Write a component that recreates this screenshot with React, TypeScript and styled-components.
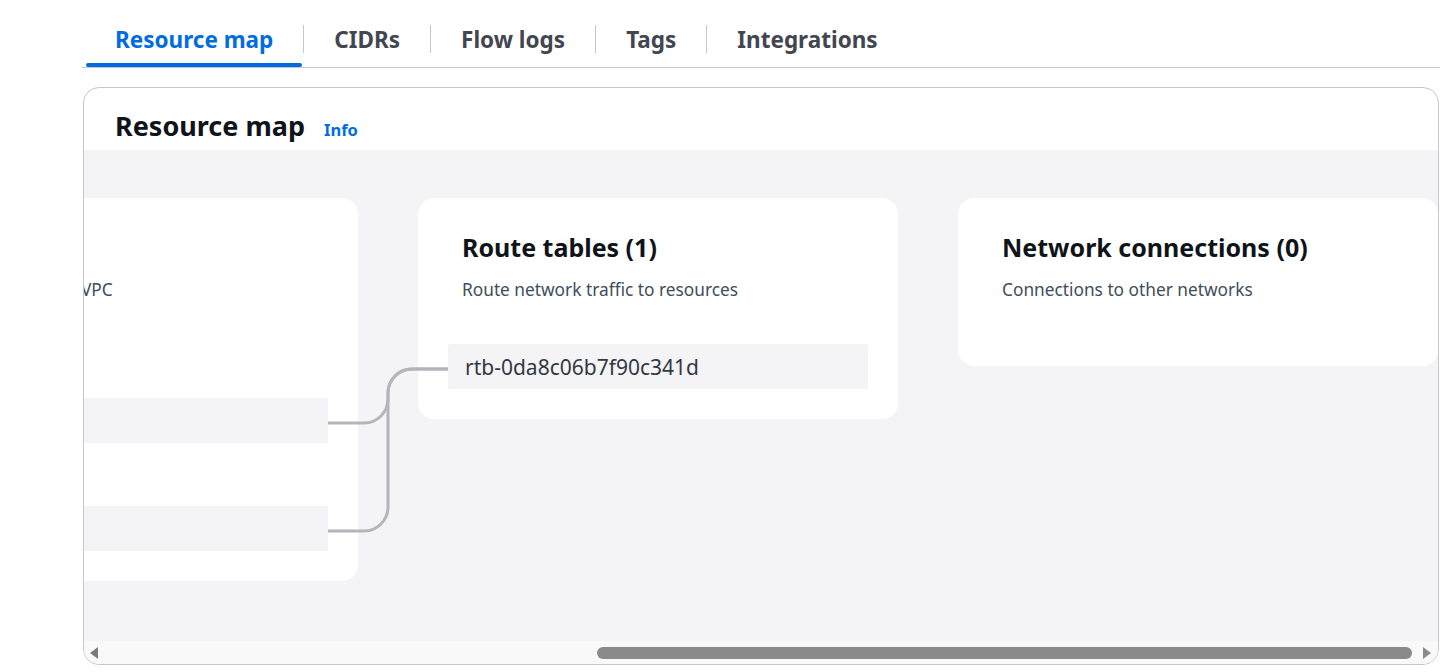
import styled, { createGlobalStyle } from "styled-components"

const GlobalStyle = createGlobalStyle`
  html, body {
    margin: 0;
    padding: 0;
    background: #ffffff;
    font-family: "Noto Sans", "Open Sans", sans-serif;
    overflow: hidden;
  }
`

const tabs = ["Resource map", "CIDRs", "Flow logs", "Tags", "Integrations"]

export default function App() {
  return (
    <Page>
      <GlobalStyle />
      <TabBar>
        {tabs.map((t, i) => (
          <TabWrap key={t}>
            {i > 0 && <Divider />}
            <Tab $active={i === 0}>{t}</Tab>
          </TabWrap>
        ))}
      </TabBar>
      <Container>
        <Header>
          <Title>Resource map</Title>
          <Info>Info</Info>
        </Header>
        <MapArea>
          <Track>
            <Card>
              <CardHead>
                <CardTitle>Subnets (2)</CardTitle>
                <CardSub>Subnets within this VPC</CardSub>
              </CardHead>
              <List>
                <Group>
                  <GroupLabel>us-east-1a</GroupLabel>
                  <Row />
                </Group>
                <Group>
                  <GroupLabel>us-east-1b</GroupLabel>
                  <Row />
                </Group>
              </List>
            </Card>
            <Card>
              <CardHead>
                <CardTitle>Route tables (1)</CardTitle>
                <CardSub>Route network traffic to resources</CardSub>
              </CardHead>
              <List>
                <Row>rtb-0da8c06b7f90c341d</Row>
              </List>
            </Card>
            <Card>
              <CardHead>
                <CardTitle>Network connections (0)</CardTitle>
                <CardSub>Connections to other networks</CardSub>
              </CardHead>
            </Card>
            <Links width="1600" height="420">
              <path d="M450 225 H486 A24 24 0 0 0 510 201 V195 A24 24 0 0 1 534 171 H570" />
              <path d="M450 333 H486 A24 24 0 0 0 510 309 V195 A24 24 0 0 1 534 171 H570" />
            </Links>
          </Track>
        </MapArea>
        <ScrollBar>
          <Arrow viewBox="0 0 10 12">
            <polygon points="9,0 9,12 1,6" fill="#7a7a7a" />
          </Arrow>
          <ScrollTrack>
            <Thumb $left={496} $width={815} />
          </ScrollTrack>
          <Arrow viewBox="0 0 10 12">
            <polygon points="1,0 1,12 9,6" fill="#8a8a8a" />
          </Arrow>
        </ScrollBar>
      </Container>
    </Page>
  )
}

const Page = styled.div`
  padding: 19px 15px 0 82px;
`
const TabBar = styled.div`
  display: flex;
  padding-left: 3px;
  border-bottom: 1px solid #c6c6cd;
`
const TabWrap = styled.div`
  display: flex;
  align-items: flex-start;
`
const Divider = styled.span`
  width: 1px;
  height: 28px;
  margin-top: 6px;
  background: #c6c6cd;
`
const Tab = styled.div<{ $active?: boolean }>`
  position: relative;
  height: 40px;
  padding: 0 30px 8px;
  display: flex;
  align-items: center;
  font-size: 22.5px;
  font-weight: 700;
  color: ${(p) => (p.$active ? "#006ce0" : "#424650")};
  &::after {
    content: "";
    display: ${(p) => (p.$active ? "block" : "none")};
    position: absolute;
    left: 1px;
    right: 1px;
    bottom: 0;
    height: 4px;
    border-radius: 3px;
    background: #006ce0;
  }
`
const Container = styled.div`
  margin: 19px 1px 0 1px;
  border: 1px solid #c6c6cd;
  border-radius: 16px;
  overflow: hidden;
  width: 1354px;
`
const Header = styled.div`
  height: 62px;
  display: flex;
  align-items: baseline;
  padding: 20px 0 0 31px;
  box-sizing: border-box;
`
const Title = styled.h2`
  margin: 0;
  font-size: 27px;
  line-height: 36px;
  font-weight: 700;
  color: #0f141a;
`
const Info = styled.a`
  margin-left: 19px;
  font-size: 16.5px;
  font-weight: 700;
  color: #006ce0;
`
const MapArea = styled.div`
  height: 491px;
  box-sizing: border-box;
  padding-top: 48px;
  background: #f4f4f6;
  overflow: hidden;
`
const Track = styled.div`
  position: relative;
  display: flex;
  align-items: flex-start;
  gap: 60px;
  margin-left: -206px;
`
const Card = styled.div`
  position: relative;
  z-index: 1;
  flex: 0 0 480px;
  box-sizing: border-box;
  padding: 34px 30px 30px;
  background: #ffffff;
  border-radius: 16px;
`
const CardHead = styled.div`
  padding: 0 14px 35px;
`
const CardTitle = styled.div`
  font-size: 25px;
  line-height: 30px;
  font-weight: 700;
  color: #0f141a;
  white-space: nowrap;
`
const CardSub = styled.div`
  margin-top: 17px;
  font-size: 17.3px;
  line-height: 22px;
  color: #414d5c;
  white-space: nowrap;
`
const List = styled.div`
  margin-top: 8px;
  display: flex;
  flex-direction: column;
  gap: 9px;
`
const Group = styled.div`
  display: flex;
  flex-direction: column;
`
const GroupLabel = styled.div`
  height: 54px;
  padding: 0 14px;
  font-size: 16px;
  line-height: 22px;
  color: #414d5c;
  visibility: hidden;
`
const Row = styled.div`
  height: 45px;
  display: flex;
  align-items: center;
  padding-left: 17px;
  background: #f4f4f6;
  border-radius: 2px;
  font-size: 21px;
  color: #333843;
`
const Links = styled.svg`
  position: absolute;
  left: 0;
  top: 0;
  z-index: 2;
  pointer-events: none;
  fill: none;
  stroke: #b4b4bb;
  stroke-width: 3;
`
const ScrollBar = styled.div`
  height: 23px;
  display: flex;
  align-items: center;
  padding: 0 6px 0 5px;
  background: #f9f9f9;
`
const Arrow = styled.svg`
  width: 10px;
  height: 12px;
  flex: 0 0 10px;
`
const ScrollTrack = styled.div`
  flex: 1;
  height: 12px;
  padding: 0 2px;
`
const Thumb = styled.div<{ $left: number; $width: number }>`
  height: 12px;
  margin-left: ${(p) => p.$left}px;
  width: ${(p) => p.$width}px;
  border-radius: 6px;
  background: #8a8a8a;
`
